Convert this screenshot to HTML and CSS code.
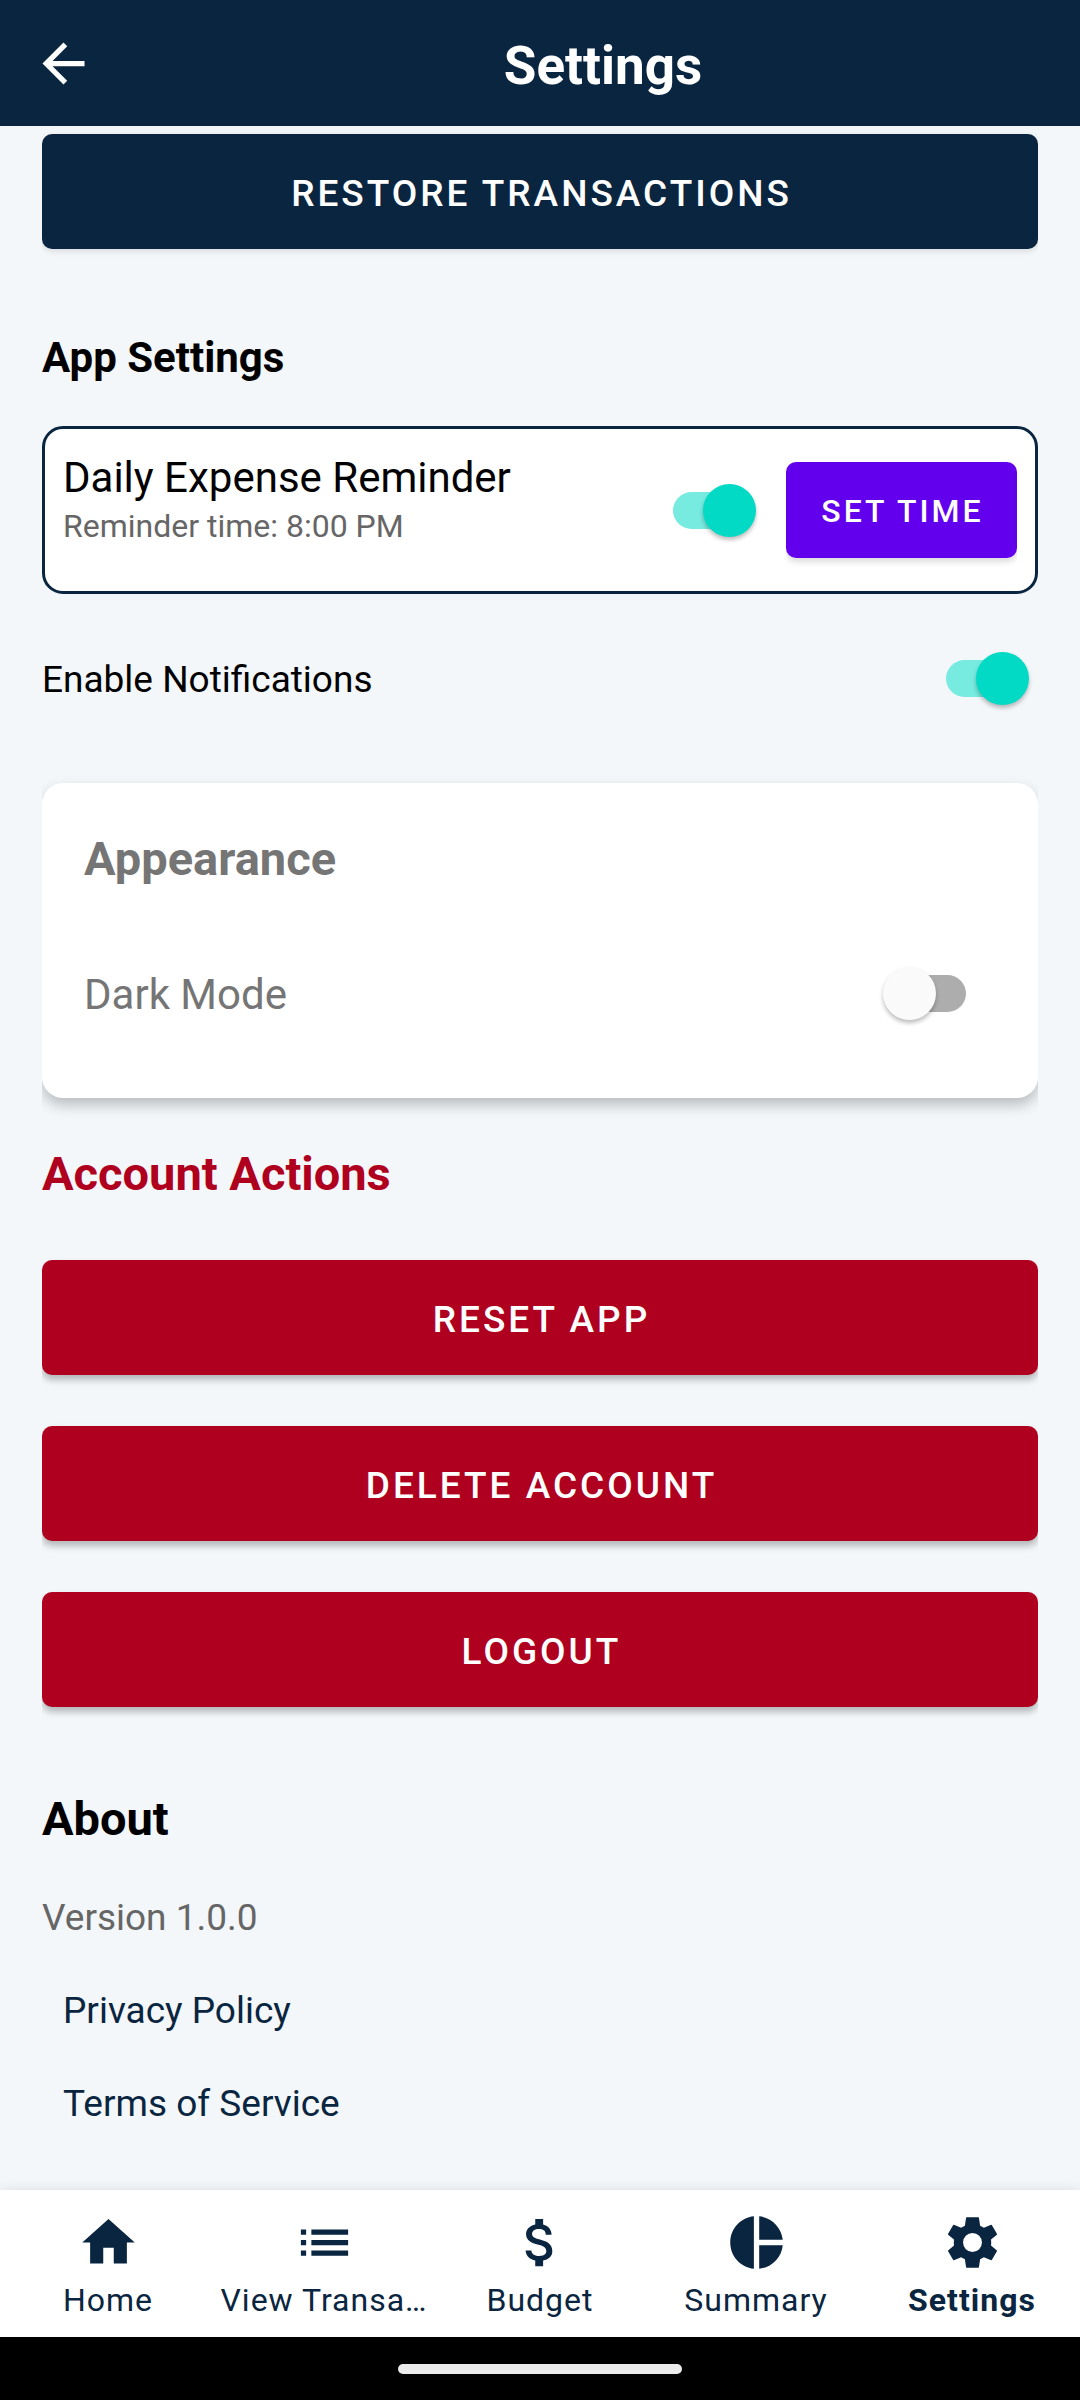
FILE: index.html
```html
<!DOCTYPE html>
<html lang="en">
<head>
<meta charset="utf-8">
<meta name="viewport" content="width=device-width, initial-scale=1">
<title>Settings</title>
<link rel="stylesheet" href="styles.css">
</head>
<body>
<div class="screen">
  <header class="topbar">
    <button class="topbar-back" type="button" aria-label="Back">
      <svg class="icon" viewBox="0 0 24 24"><path d="M20 11H7.83l5.59-5.59L12 4l-8 8 8 8 1.41-1.41L7.83 13H20v-2z"/></svg>
    </button>
    <h1 class="topbar-title">Settings</h1>
  </header>

  <main class="content">
    <button class="button button-primary" type="button">RESTORE TRANSACTIONS</button>

    <section class="group">
      <h2 class="heading heading-small">App Settings</h2>
      <div class="reminder">
        <div class="reminder-text">
          <label class="reminder-title" for="reminder">Daily Expense Reminder</label>
          <p class="reminder-time">Reminder time: 8:00 PM</p>
        </div>
        <input class="switch" type="checkbox" role="switch" id="reminder" checked>
        <button class="button-time" type="button">SET TIME</button>
      </div>
      <div class="notifications">
        <label for="notifications">Enable Notifications</label>
        <input class="switch" type="checkbox" role="switch" id="notifications" checked>
      </div>
    </section>

    <section class="appearance">
      <h2 class="heading">Appearance</h2>
      <div class="appearance-row">
        <label for="dark">Dark Mode</label>
        <input class="switch" type="checkbox" role="switch" id="dark">
      </div>
    </section>

    <section class="account">
      <h2 class="heading">Account Actions</h2>
      <div class="account-buttons">
        <button class="button button-danger" type="button">RESET APP</button>
        <button class="button button-danger" type="button">DELETE ACCOUNT</button>
        <button class="button button-danger" type="button">LOGOUT</button>
      </div>
    </section>

    <section class="about">
      <h2 class="heading">About</h2>
      <p class="version">Version 1.0.0</p>
      <a class="about-link" href="#privacy">Privacy Policy</a>
      <a class="about-link" href="#terms">Terms of Service</a>
    </section>
  </main>

  <nav class="tabs">
    <a class="tab" href="#home">
      <svg class="icon" viewBox="0 0 24 24"><path d="M10 20v-6h4v6h5v-8h3L12 3 2 12h3v8z"/></svg>
      <span class="tab-label">Home</span>
    </a>
    <a class="tab" href="#transactions">
      <svg class="icon" viewBox="0 0 24 24"><path d="M3 13h2v-2H3v2zm0 4h2v-2H3v2zm0-8h2V7H3v2zm4 4h14v-2H7v2zm0 4h14v-2H7v2zM7 7v2h14V7H7z"/></svg>
      <span class="tab-label">View Transa…</span>
    </a>
    <a class="tab" href="#budget">
      <svg class="icon" viewBox="0 0 24 24"><path d="M11.8 10.9c-2.27-.59-3-1.2-3-2.15 0-1.09 1.01-1.85 2.7-1.85 1.78 0 2.44.85 2.5 2.1h2.21c-.07-1.72-1.12-3.3-3.21-3.81V3h-3v2.16c-1.94.42-3.5 1.68-3.5 3.61 0 2.31 1.91 3.46 4.7 4.13 2.5.6 3 1.48 3 2.41 0 .69-.49 1.79-2.7 1.79-2.06 0-2.87-.92-2.98-2.1h-2.2c.12 2.19 1.76 3.42 3.68 3.83V21h3v-2.15c1.95-.37 3.5-1.5 3.5-3.55 0-2.84-2.43-3.81-4.7-4.4z"/></svg>
      <span class="tab-label">Budget</span>
    </a>
    <a class="tab" href="#summary">
      <svg class="icon" viewBox="0 0 24 24"><path d="M11 2v20c-5.07-.5-9-4.79-9-10s3.93-9.5 9-10zm2.03 0v8.99H22c-.47-4.74-4.24-8.52-8.97-8.99zm0 11.01V22c4.74-.47 8.5-4.25 8.97-8.99h-8.97z"/></svg>
      <span class="tab-label">Summary</span>
    </a>
    <a class="tab tab-active" href="#settings" aria-current="page">
      <svg class="icon" viewBox="0 0 24 24"><path fill-rule="evenodd" d="M9.75 2.4h4.5l.2.15.45 3.05 1.45.75 2.75-1.1.25.1 2 3.4-.05.25-2.25 1.85q.15 1.15 0 2.3l2.25 1.85.05.25-2 3.4-.25.1-2.75-1.1-1.45.75-.45 3.05-.2.15h-4.5l-.2-.15-.45-3.05-1.45-.75-2.75 1.1-.25-.1-2-3.4.05-.25 2.25-1.85q-.15-1.15 0-2.3L2.7 9l-.05-.25 2-3.4.25-.1 2.75 1.1 1.45-.75.45-3.05zM12 8.4a3.6 3.6 0 1 0 0 7.2 3.6 3.6 0 0 0 0-7.2z"/></svg>
      <span class="tab-label">Settings</span>
    </a>
  </nav>
  <div class="gesture-bar"><span class="gesture-pill"></span></div>
</div>
</body>
</html>
```
FILE: styles.css
```css
:root {
  --navy: #0a2540;
  --page: #f3f7fa;
  --red: #b00020;
  --teal: #03dac5;
  --purple: #6200ee;
}

* {
  box-sizing: border-box;
}

body {
  margin: 0;
  background: var(--page);
  color: #000;
  font: 400 37px/44px Roboto, sans-serif;
}

h1,
h2,
p {
  margin: 0;
}

a {
  color: var(--navy);
  text-decoration: none;
}

button {
  border: 0;
  padding: 0;
  color: #fff;
  font-family: inherit;
}

.icon {
  display: block;
  width: 63px;
  height: 63px;
  fill: currentColor;
}

.screen {
  display: flex;
  flex-direction: column;
  min-height: 100vh;
}

/* Top bar */
.topbar {
  display: flex;
  align-items: center;
  height: 126px;
  background: var(--navy);
  color: #fff;
}

.topbar-back {
  display: grid;
  place-items: center;
  width: 126px;
  height: 126px;
  background: none;
}

.topbar-title {
  flex: 1;
  font-size: 53px;
  line-height: 62px;
  font-weight: 700;
  text-align: center;
  padding-top: 6px;
}

/* Scrolling content */
.content {
  flex: 1;
  display: flex;
  flex-direction: column;
  padding: 8px 42px 0;
}

.heading {
  font-size: 47px;
  line-height: 56px;
  font-weight: 700;
}

.heading-small {
  font-size: 42px;
  line-height: 50px;
}

/* Shadows fall above and below a control, never past its sides */
.button {
  width: 100%;
  height: 115px;
  padding: 3px 0 0 3px;
  border-radius: 10px;
  clip-path: inset(-20px 0);
  font-size: 37px;
  font-weight: 500;
  letter-spacing: 3px;
}

.button-primary {
  background: var(--navy);
  box-shadow: 0 2px 6px rgba(0, 0, 0, 0.12);
}

.button-danger {
  background: var(--red);
  box-shadow: 0 5px 7px rgba(0, 0, 0, 0.26);
}

/* Switch */
.switch {
  appearance: none;
  display: grid;
  flex: none;
  width: 83px;
  height: 53px;
  margin: 0;
}

.switch::before,
.switch::after {
  content: "";
  grid-area: 1 / 1;
  align-self: center;
}

.switch::before {
  height: 37px;
  margin-left: 5px;
  border-radius: 19px;
  background: #adadad;
}

.switch::after {
  width: 53px;
  height: 53px;
  border-radius: 50%;
  background: #fafafa;
  box-shadow: 0 3px 4px rgba(0, 0, 0, 0.26);
}

.switch:checked::before {
  margin: 0 5px 0 0;
  background: #77ebe0;
}

.switch:checked::after {
  justify-self: end;
  background: var(--teal);
}

/* App settings */
.group {
  padding-top: 84px;
}

.reminder {
  display: flex;
  align-items: center;
  height: 168px;
  margin-top: 43px;
  padding: 0 18px;
  border: 3px solid var(--navy);
  border-radius: 21px;
  background: #fff;
}

.reminder-text {
  flex: 1;
  display: flex;
  flex-direction: column;
  height: 114px;
}

.reminder-title {
  font-size: 42px;
  line-height: 50px;
}

.reminder-time {
  color: #666;
  font-size: 32px;
  line-height: 46px;
}

.button-time {
  width: 231px;
  height: 96px;
  margin-left: 30px;
  padding: 2px 0 0 2px;
  border-radius: 10px;
  clip-path: inset(-20px 0);
  background: var(--purple);
  box-shadow: 0 4px 6px rgba(0, 0, 0, 0.14);
  font-size: 32px;
  font-weight: 500;
  letter-spacing: 3px;
}

.notifications {
  display: flex;
  align-items: center;
  justify-content: space-between;
  margin-top: 58px;
  padding-right: 9px;
}

.notifications label,
.appearance-row label {
  padding-top: 2px;
}

/* Appearance */
.appearance {
  margin-top: 78px;
  padding: 48px 72px 77px 42px;
  border-radius: 21px;
  clip-path: inset(-30px 0);
  background: #fff;
  box-shadow: 0 7px 14px rgba(0, 0, 0, 0.24);
  color: #757575;
}

.appearance-row {
  display: flex;
  align-items: center;
  justify-content: space-between;
  margin-top: 79px;
  font-size: 42px;
  line-height: 53px;
}

/* Account actions */
.account {
  padding-top: 48px;
}

.account .heading {
  color: var(--red);
}

.account-buttons {
  display: grid;
  gap: 51px;
  margin-top: 58px;
}

/* About */
.about {
  display: flex;
  flex-direction: column;
  align-items: flex-start;
  padding: 84px 0 42px;
}

.version {
  margin-top: 49px;
  color: #666;
}

.about-link {
  margin: 49px 0 0 21px;
}

/* Bottom tabs */
.tabs {
  display: grid;
  grid-template-columns: repeat(5, 1fr);
  height: 147px;
  background: #fff;
  box-shadow: 0 0 12px rgba(0, 0, 0, 0.1);
}

.tab {
  display: flex;
  flex-direction: column;
  align-items: center;
  padding-top: 21px;
}

.tab-label {
  font-size: 32px;
  line-height: 38px;
  letter-spacing: 1px;
  white-space: nowrap;
  padding-top: 7px;
}

.tab-active {
  font-weight: 700;
}

.gesture-bar {
  display: grid;
  place-items: center;
  height: 63px;
  background: #000;
}

.gesture-pill {
  width: 284px;
  height: 10px;
  border-radius: 5px;
  background: #ebebeb;
}
```
